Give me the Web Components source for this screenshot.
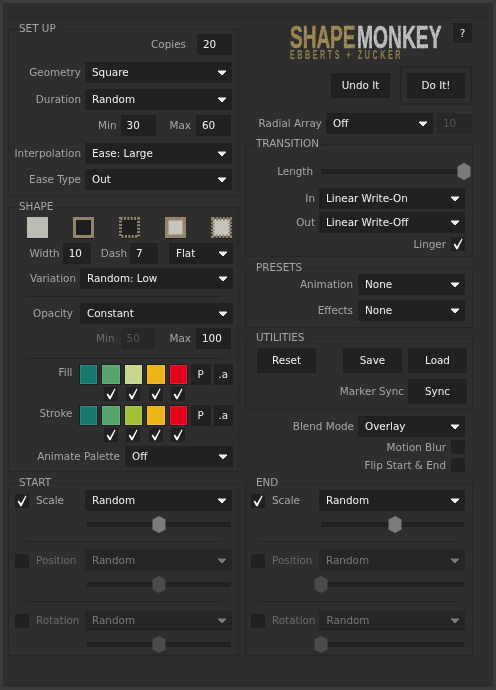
<!DOCTYPE html>
<html>
<head>
<meta charset="utf-8">
<style>
    html, body { margin: 0; background: #2e2e2e; }
</style>
</head>
<body>
<sm-panel></sm-panel>
<script>
const check = `<svg width="14" height="14" viewBox="0 0 14 14"><path fill="currentColor" d="M2.6 7.6 L4 6.6 L6 9.4 L10.6 1.4 L11.6 2 L6.6 12.2 L5.3 12.2 Z"/></svg>`;

class SmLabel extends HTMLElement {
    constructor() {
        super();
        this.attachShadow({mode: "open"}).innerHTML = `
            <style>
                :host { display: block; flex: none; margin-right: 4px; color: #a6a6a6; text-align: right; white-space: nowrap; }
                :host([dim]) { color: #6c6c6c; }
            </style>
            <slot></slot>`;
    }
}

class SmRow extends HTMLElement {
    constructor() {
        super();
        this.attachShadow({mode: "open"}).innerHTML = `
            <style>
                :host { display: flex; align-items: center; justify-content: flex-end; padding-right: var(--pad, 0); }
            </style>
            <slot></slot>`;
    }
}

class SmRule extends HTMLElement {
    constructor() {
        super();
        this.attachShadow({mode: "open"}).innerHTML = `
            <style>
                :host { display: block; height: 1px; width: 195px; margin-left: 17px; background: #222; }
            </style>`;
    }
}

class SmGroup extends HTMLElement {
    connectedCallback() {
        if (this.shadowRoot) return;
        this.attachShadow({mode: "open"}).innerHTML = `
            <style>
                :host { display: block; box-sizing: border-box; border: 1px solid #262626; }
                .legend { display: table; height: 12px; line-height: 12px; margin: -8px 0 0 7px; padding: 0 3px; background: #2e2e2e; color: #a6a6a6; }
            </style>
            <div class="legend">${this.getAttribute("label")}</div>
            <slot></slot>`;
    }
}

class SmSelect extends HTMLElement {
    connectedCallback() {
        if (this.shadowRoot) return;
        this.attachShadow({mode: "open"}).innerHTML = `
            <style>
                :host { display: flex; flex: none; align-items: center; justify-content: space-between; box-sizing: border-box; height: 21px; padding: 0 5px 0 7px; background: #212121; color: #f2f2f2; }
                :host([disabled]) { color: #797979; background: #262626; }
                svg { flex: none; }
            </style>
            <span>${this.getAttribute("value")}</span>
            <svg width="10" height="6" viewBox="0 0 10 6"><path fill="currentColor" stroke="currentColor" stroke-linejoin="round" d="M1 1 H9 L5 5 Z"/></svg>`;
    }
}

class SmField extends HTMLElement {
    connectedCallback() {
        if (this.shadowRoot) return;
        this.attachShadow({mode: "open"}).innerHTML = `
            <style>
                :host { display: flex; flex: none; align-items: center; box-sizing: border-box; width: 35px; height: 21px; padding-left: 6px; background: #212121; color: #f2f2f2; }
                :host([disabled]) { color: #555; background: #272727; }
            </style>
            <span>${this.getAttribute("value")}</span>`;
    }
}

class SmButton extends HTMLElement {
    constructor() {
        super();
        this.attachShadow({mode: "open"}).innerHTML = `
            <style>
                :host { display: flex; flex: none; align-items: center; justify-content: center; box-sizing: border-box; width: 59px; height: 25px; background: #212121; color: #f2f2f2; }
            </style>
            <slot></slot>`;
    }
}

class SmCheck extends HTMLElement {
    connectedCallback() {
        if (this.shadowRoot) return;
        this.attachShadow({mode: "open"}).innerHTML = `
            <style>
                :host { display: block; flex: none; width: 14px; height: 14px; background: #212121; color: #fff; }
                svg { display: block; }
            </style>
            ${this.hasAttribute("checked") ? check : ""}`;
    }
}

class SmSlider extends HTMLElement {
    connectedCallback() {
        if (this.shadowRoot) return;
        this.attachShadow({mode: "open"}).innerHTML = `
            <style>
                :host { display: flex; flex: none; align-items: center; position: relative; width: 144px; height: 17px; }
                .track { width: 100%; height: 5px; background: #212121; }
                svg { position: absolute; top: 0; left: calc(${this.getAttribute("value")}% - 7px); color: #7b7b7b; }
                :host([disabled]) svg { color: #4b4b4b; }
            </style>
            <div class="track"></div>
            <svg width="14" height="17" viewBox="0 0 14 17"><path fill="currentColor" d="M7 0 L13.5 3.5 V13.5 L7 17 L.5 13.5 V3.5 Z"/></svg>`;
    }
}

class SmShape extends HTMLElement {
    connectedCallback() {
        if (this.shadowRoot) return;
        const kind = this.getAttribute("kind");
        const dash = kind.includes("dash") ? `stroke-dasharray="2 1.4"` : "";
        const fill = kind === "solid" ? "#bdbcb4" : kind.includes("fill") ? "#c6c5bd" : "#1f1f1f";
        const stroke = kind === "solid" ? "#bdbcb4" : "#92856a";
        const wide = kind.includes("fill") ? 3.5 : 3;
        const at = wide / 2;
        this.attachShadow({mode: "open"}).innerHTML = `
            <style>
                :host { display: block; flex: none; width: 21px; height: 21px; filter: drop-shadow(0 1px 0 #1c1c1c); }
                svg { display: block; }
            </style>
            <svg width="21" height="21" viewBox="0 0 21 21">
                <rect x="${at}" y="${at}" width="${21 - wide}" height="${21 - wide}" fill="${fill}" stroke="${stroke}" stroke-width="${wide}" ${dash}/>
            </svg>`;
    }
}

class SmPalette extends HTMLElement {
    connectedCallback() {
        if (this.shadowRoot) return;
        const colors = this.getAttribute("colors").split(" ");
        this.attachShadow({mode: "open"}).innerHTML = `
            <style>
                :host { display: block; padding-right: var(--pad, 0); }
                .top, .checks { display: flex; justify-content: flex-end; gap: 3px; }
                .top { align-items: flex-start; height: 21px; }
                .label { flex: none; margin: 2px 3px 0 0; color: #a6a6a6; }
                .swatch { flex: none; box-sizing: border-box; width: 19.5px; height: 21px; border: 1px solid #1e1e1e; box-shadow: inset 0 0 0 1px rgba(255,255,255,.12); }
                .key { display: flex; flex: none; align-items: center; justify-content: center; width: 19.5px; height: 21px; background: #212121; color: #e6e6e6; }
                .checks { margin-top: 2px; padding-right: 45px; }
                .cell { display: flex; flex: none; justify-content: center; width: 19.5px; }
            </style>
            <div class="top">
                <span class="label">${this.getAttribute("label")}</span>
                ${colors.map((c) => `<div class="swatch" style="background:${c}"></div>`).join("")}
                <div class="key">P</div>
                <div class="key">.a</div>
            </div>
            <div class="checks">
                ${[1, 2, 3, 4].map(() => `<div class="cell"><sm-check checked></sm-check></div>`).join("")}
            </div>`;
    }
}

class SmLogo extends HTMLElement {
    constructor() {
        super();
        this.attachShadow({mode: "open"}).innerHTML = `
            <style>
                :host { display: block; flex: none; width: 152px; height: 36px; font-family: "Liberation Sans", Arial, sans-serif; font-weight: 700; }
                .title { display: flex; gap: 1.5px; height: 24px; }
                .title span { display: block; height: 24px; font-size: 31px; line-height: 26px; white-space: nowrap; transform-origin: 0 0; -webkit-text-stroke: .6px currentColor; filter: url(#rough); }
                .shape { width: 65.5px; transform: scaleX(.613); color: #a18d57; }
                .monkey { width: 84.5px; transform: scaleX(.621); color: #c4c4c4; }
                .sub { height: 11px; margin-top: 1px; font-size: 12px; line-height: 11px; letter-spacing: 4.2px; white-space: nowrap; color: #8f7d4e; transform-origin: 0 0; transform: scaleX(.6); }
                svg { position: absolute; width: 0; height: 0; }
            </style>
            <svg aria-hidden="true">
                <filter id="rough" x="0" y="0" width="100%" height="100%">
                    <feTurbulence type="fractalNoise" baseFrequency="0.9" numOctaves="2" seed="4" result="n"/>
                    <feColorMatrix in="n" type="matrix" values="0 0 0 0 0  0 0 0 0 0  0 0 0 0 0  0 0 0 -1.4 1.7" result="m"/>
                    <feComposite in="SourceGraphic" in2="m" operator="in"/>
                </filter>
            </svg>
            <div class="title"><span class="shape">SHAPE</span><span class="monkey">MONKEY</span></div>
            <div class="sub">EBBERTS + ZUCKER</div>`;
    }
}

class SmHeader extends HTMLElement {
    constructor() {
        super();
        this.attachShadow({mode: "open"}).innerHTML = `
            <style>
                :host { display: block; height: 121px; --pad: 1px; }
                .wrap { display: flex; align-items: center; justify-content: center; box-sizing: border-box; width: 72px; height: 39px; margin-left: 10px; border: 2px solid #262626; }
                .top { align-items: flex-start; height: 38px; }
            </style>
            <sm-row class="top">
                <sm-logo style="margin:2px 11px 0 0"></sm-logo>
                <sm-button style="width:19px;height:20px">?</sm-button>
            </sm-row>
            <sm-row style="margin-top:5px">
                <sm-button>Undo It</sm-button>
                <div class="wrap"><sm-button style="width:58px">Do It!</sm-button></div>
            </sm-row>
            <sm-row style="margin-top:8px">
                <sm-label>Radial Array</sm-label>
                <sm-select value="Off" style="width:107px;margin-right:4px"></sm-select>
                <sm-field value="10" disabled></sm-field>
            </sm-row>`;
    }
}

class SmSetup extends HTMLElement {
    constructor() {
        super();
        this.attachShadow({mode: "open"}).innerHTML = `
            <style>
                :host { display: block; margin-top: 6px; --pad: 6px; }
                sm-group { height: 167px; }
            </style>
            <sm-group label="SET UP">
                <sm-row>
                    <sm-label style="margin-right:11px">Copies</sm-label>
                    <sm-field value="20"></sm-field>
                </sm-row>
                <sm-row style="margin-top:7px">
                    <sm-label>Geometry</sm-label>
                    <sm-select value="Square" style="width:147px"></sm-select>
                </sm-row>
                <sm-row style="margin-top:6px">
                    <sm-label>Duration</sm-label>
                    <sm-select value="Random" style="width:147px"></sm-select>
                </sm-row>
                <sm-row style="margin-top:5px;padding-right:7px">
                    <sm-label>Min</sm-label>
                    <sm-field value="30" style="margin-right:14px"></sm-field>
                    <sm-label style="margin-right:5px">Max</sm-label>
                    <sm-field value="60"></sm-field>
                </sm-row>
                <sm-row style="margin-top:7px">
                    <sm-label>Interpolation</sm-label>
                    <sm-select value="Ease: Large" style="width:147px"></sm-select>
                </sm-row>
                <sm-row style="margin-top:5px">
                    <sm-label>Ease Type</sm-label>
                    <sm-select value="Out" style="width:147px"></sm-select>
                </sm-row>
            </sm-group>`;
    }
}

class SmShapeBox extends HTMLElement {
    constructor() {
        super();
        this.attachShadow({mode: "open"}).innerHTML = `
            <style>
                :host { display: block; margin-top: 11px; --pad: 5px; }
                sm-group { height: 265px; }
                .shapes { display: flex; gap: 25px; margin-top: 5px; padding-left: 18px; }
            </style>
            <sm-group label="SHAPE">
                <div class="shapes">
                    <sm-shape kind="solid"></sm-shape>
                    <sm-shape kind="line"></sm-shape>
                    <sm-shape kind="dash"></sm-shape>
                    <sm-shape kind="line fill"></sm-shape>
                    <sm-shape kind="dash fill"></sm-shape>
                </div>
                <sm-row style="margin-top:5px">
                    <sm-label style="margin-right:3px">Width</sm-label>
                    <sm-field value="10" style="width:28px;margin-right:10px"></sm-field>
                    <sm-label style="margin-right:3px">Dash</sm-label>
                    <sm-field value="7" style="width:28px;margin-right:11px"></sm-field>
                    <sm-select value="Flat" style="width:64px"></sm-select>
                </sm-row>
                <sm-row style="margin-top:4px">
                    <sm-label>Variation</sm-label>
                    <sm-select value="Random: Low" style="width:153px"></sm-select>
                </sm-row>
                <sm-rule style="margin-top:7px"></sm-rule>
                <sm-row style="margin-top:6px">
                    <sm-label style="margin-right:7px">Opacity</sm-label>
                    <sm-select value="Constant" style="width:153px"></sm-select>
                </sm-row>
                <sm-row style="margin-top:4px;padding-right:7px">
                    <sm-label dim style="margin-right:6px">Min</sm-label>
                    <sm-field value="50" disabled style="width:34px;margin-right:15px"></sm-field>
                    <sm-label style="margin-right:5px">Max</sm-label>
                    <sm-field value="100"></sm-field>
                </sm-row>
                <sm-rule style="margin-top:9px"></sm-rule>
                <sm-palette label="Fill" colors="#147a6d #55a468 #c8d78f #edb214 #e2001a" style="margin-top:5px"></sm-palette>
                <sm-palette label="Stroke" colors="#147a6d #55a468 #a2c235 #edb214 #e2001a" style="margin-top:4px"></sm-palette>
                <sm-row style="margin-top:4px">
                    <sm-label style="margin-right:5px">Animate Palette</sm-label>
                    <sm-select value="Off" style="width:108px"></sm-select>
                </sm-row>
            </sm-group>`;
    }
}

class SmMotion extends HTMLElement {
    connectedCallback() {
        if (this.shadowRoot) return;
        const left = this.getAttribute("inset");
        const width = this.getAttribute("select");
        const track = this.getAttribute("track");
        const marks = this.getAttribute("marks").split(" ");
        const part = (name, on, mark, top) => `
            <sm-row style="margin-top:${top}px;justify-content:flex-start">
                <sm-check ${on ? "checked" : ""} style="margin:0 7px 0 ${left}px"></sm-check>
                <sm-label ${on ? "" : "dim"}>${name}</sm-label>
                <sm-select value="Random" ${on ? "" : "disabled"} style="width:${width}px;margin-left:auto"></sm-select>
            </sm-row>
            <sm-row class="bar">
                <sm-slider value="${mark}" ${on ? "" : "disabled"} style="width:${track}px"></sm-slider>
            </sm-row>`;
        this.attachShadow({mode: "open"}).innerHTML = `
            <style>
                :host { display: block; margin-top: 11px; --pad: ${this.getAttribute("pad")}px; }
                sm-group { height: 173px; }
                .bar { margin-top: 5px; padding-right: ${Number(this.getAttribute("pad")) + 1}px; }
                sm-rule { margin-top: 8px; margin-left: ${this.getAttribute("rule")}px; }
            </style>
            <sm-group label="${this.getAttribute("label")}">
                ${part("Scale", true, marks[0], 2)}
                <sm-rule></sm-rule>
                ${part("Position", false, marks[1], 8)}
                <sm-rule></sm-rule>
                ${part("Rotation", false, marks[2], 8)}
            </sm-group>`;
    }
}

class SmTransition extends HTMLElement {
    constructor() {
        super();
        this.attachShadow({mode: "open"}).innerHTML = `
            <style>
                :host { display: block; --pad: 7px; }
                sm-group { height: 113px; }
            </style>
            <sm-group label="TRANSITION">
                <sm-row style="margin-top:14px;padding-right:8px">
                    <sm-label style="margin-right:8px">Length</sm-label>
                    <sm-slider value="100" style="width:143px"></sm-slider>
                </sm-row>
                <sm-row style="margin-top:8px">
                    <sm-label>In</sm-label>
                    <sm-select value="Linear Write-On" style="width:146px"></sm-select>
                </sm-row>
                <sm-row style="margin-top:3px">
                    <sm-label>Out</sm-label>
                    <sm-select value="Linear Write-Off" style="width:146px"></sm-select>
                </sm-row>
                <sm-row style="margin-top:4px">
                    <sm-label style="margin-right:5px">Linger</sm-label>
                    <sm-check checked></sm-check>
                </sm-row>
            </sm-group>`;
    }
}

class SmPresets extends HTMLElement {
    constructor() {
        super();
        this.attachShadow({mode: "open"}).innerHTML = `
            <style>
                :host { display: block; margin-top: 11px; --pad: 7px; }
                sm-group { height: 60px; }
            </style>
            <sm-group label="PRESETS">
                <sm-row style="margin-top:1px">
                    <sm-label style="margin-right:5px">Animation</sm-label>
                    <sm-select value="None" style="width:107px"></sm-select>
                </sm-row>
                <sm-row style="margin-top:5px">
                    <sm-label style="margin-right:5px">Effects</sm-label>
                    <sm-select value="None" style="width:107px"></sm-select>
                </sm-row>
            </sm-group>`;
    }
}

class SmUtilities extends HTMLElement {
    constructor() {
        super();
        this.attachShadow({mode: "open"}).innerHTML = `
            <style>
                :host { display: block; margin-top: 10px; --pad: 5px; }
                sm-group { height: 72px; }
            </style>
            <sm-group label="UTILITIES">
                <sm-row style="margin-top:5px">
                    <sm-button style="margin-right:27px">Reset</sm-button>
                    <sm-button style="margin-right:6px">Save</sm-button>
                    <sm-button>Load</sm-button>
                </sm-row>
                <sm-row style="margin-top:6px">
                    <sm-label>Marker Sync</sm-label>
                    <sm-button>Sync</sm-button>
                </sm-row>
            </sm-group>`;
    }
}

class SmBlend extends HTMLElement {
    constructor() {
        super();
        this.attachShadow({mode: "open"}).innerHTML = `
            <style>
                :host { display: block; box-sizing: border-box; height: 62px; padding-top: 6px; --pad: 8px; }
            </style>
            <sm-row>
                <sm-label>Blend Mode</sm-label>
                <sm-select value="Overlay" style="width:107px"></sm-select>
            </sm-row>
            <sm-row style="margin-top:3px">
                <sm-label style="margin-right:5px">Motion Blur</sm-label>
                <sm-check></sm-check>
            </sm-row>
            <sm-row style="margin-top:4px">
                <sm-label style="margin-right:5px">Flip Start &amp; End</sm-label>
                <sm-check></sm-check>
            </sm-row>`;
    }
}

class SmPanel extends HTMLElement {
    constructor() {
        super();
        this.attachShadow({mode: "open"}).innerHTML = `
            <style>
                :host { display: block; box-sizing: border-box; width: 496px; height: 690px; overflow: hidden; border: 3px solid #3c3c3c; background: #2e2e2e; font: 10.4px/13px "DejaVu Sans", sans-serif; }
                .inner { filter: blur(.3px); }
                .strip { height: 14px; border-bottom: 1px solid #272727; }
                .columns { display: grid; grid-template-columns: 231px 228px; column-gap: 6px; padding: 5px 0 0 5px; }
            </style>
            <div class="inner">
                <div class="strip"></div>
                <div class="columns">
                    <div>
                        <sm-setup></sm-setup>
                        <sm-shape-box></sm-shape-box>
                        <sm-motion label="START" inset="6" select="147" pad="6" track="144" rule="17" marks="50 50 50"></sm-motion>
                    </div>
                    <div>
                        <sm-header></sm-header>
                        <sm-transition></sm-transition>
                        <sm-presets></sm-presets>
                        <sm-utilities></sm-utilities>
                        <sm-blend></sm-blend>
                        <sm-motion label="END" inset="5" select="146" pad="7" track="143" rule="14" marks="52 0 0" style="margin-top:11px"></sm-motion>
                    </div>
                </div>
            </div>`;
    }
}

customElements.define("sm-label", SmLabel);
customElements.define("sm-row", SmRow);
customElements.define("sm-rule", SmRule);
customElements.define("sm-group", SmGroup);
customElements.define("sm-select", SmSelect);
customElements.define("sm-field", SmField);
customElements.define("sm-button", SmButton);
customElements.define("sm-check", SmCheck);
customElements.define("sm-slider", SmSlider);
customElements.define("sm-shape", SmShape);
customElements.define("sm-palette", SmPalette);
customElements.define("sm-logo", SmLogo);
customElements.define("sm-header", SmHeader);
customElements.define("sm-setup", SmSetup);
customElements.define("sm-shape-box", SmShapeBox);
customElements.define("sm-motion", SmMotion);
customElements.define("sm-transition", SmTransition);
customElements.define("sm-presets", SmPresets);
customElements.define("sm-utilities", SmUtilities);
customElements.define("sm-blend", SmBlend);
customElements.define("sm-panel", SmPanel);
</script>
</body>
</html>
